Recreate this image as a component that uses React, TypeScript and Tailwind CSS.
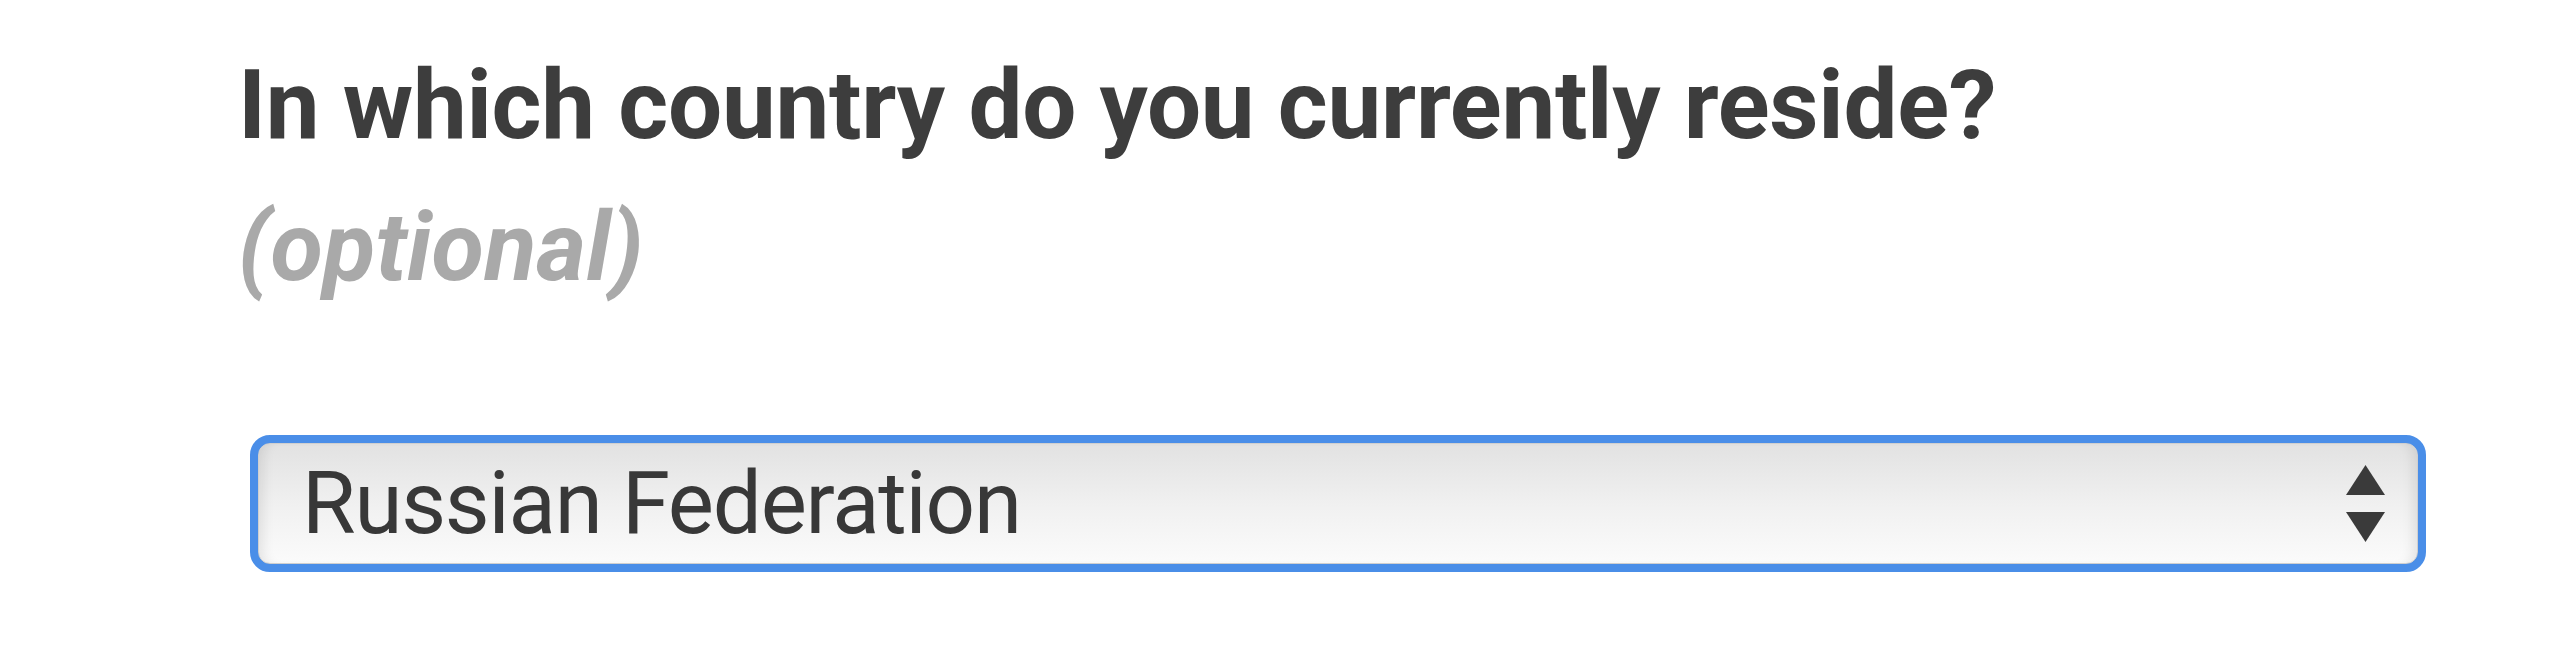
export default function App() {
  return (
    <div className="h-[663px] w-full bg-white pl-[238px] pt-[49px] font-['Roboto',sans-serif]">
      <h2 className="text-[96px] font-bold leading-[112px] tracking-[-0.3px] text-[#3d3d3d]">
        In which country do you currently reside?
      </h2>
      <p className="mt-[30px] text-[96px] font-bold italic leading-[112px] text-[#a9a9a9]">
        (optional)
      </p>
      <div className="ml-[12px] mt-[132px] h-[137px] w-[2176px] rounded-[20px] border-[8px] border-[#4a8ee8] bg-[#4a8ee8]">
        <div className="flex h-full w-full items-center justify-between rounded-[12px] border border-[#cfcfcf] bg-gradient-to-b from-[#e2e2e2] via-[#f0f0f0] to-[#fbfbfb] pl-[43px] pr-[32px] shadow-[inset_12px_0_12px_-8px_rgba(0,0,0,0.09),inset_-12px_0_12px_-8px_rgba(0,0,0,0.09)]">
          <span className="text-[87px] leading-none tracking-[-1.2px] text-[#383838]">Russian Federation</span>
          <svg width="39" height="77" viewBox="0 0 39 77" aria-hidden="true">
            <polygon points="19.5,0 39,30 0,30" fill="#3a3a3a" />
            <polygon points="0,47 39,47 19.5,77" fill="#3a3a3a" />
          </svg>
        </div>
      </div>
    </div>
  );
}
